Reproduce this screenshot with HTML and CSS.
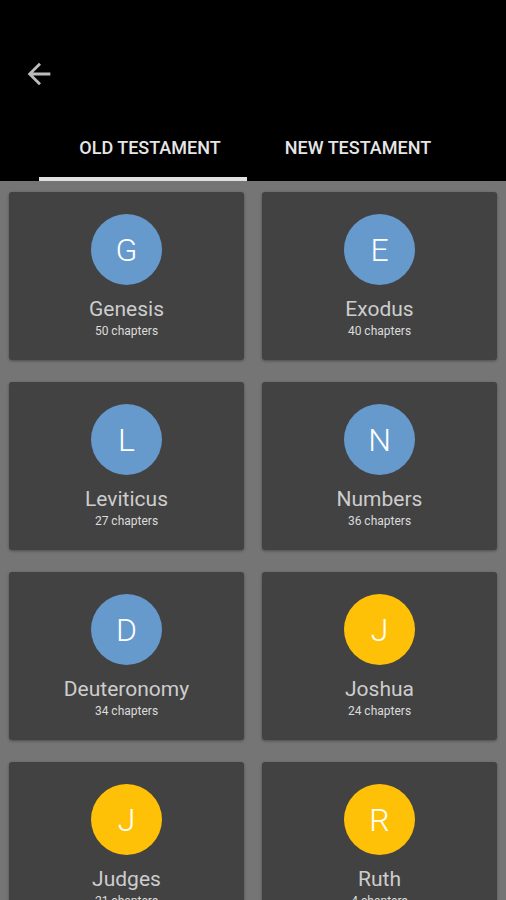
FILE: index.html
```html
<!DOCTYPE html>
<html lang="en">
<head>
  <meta charset="UTF-8">
  <meta name="viewport" content="width=device-width, initial-scale=1.0">
  <title>Books</title>
  <link rel="stylesheet" href="styles.css">
</head>
<body>
  <header class="appbar">
    <div class="statusbar"></div>
    <div class="toolbar">
      <button class="back" aria-label="Back">
        <svg viewBox="0 0 24 24" width="34" height="34">
          <path d="M20 11H7.83l5.59-5.59L12 4l-8 8 8 8 1.41-1.41L7.83 13H20v-2z" fill="#bdbdbd"/>
        </svg>
      </button>
    </div>
    <nav class="tabs">
      <div class="tab active">OLD TESTAMENT</div>
      <div class="tab">NEW TESTAMENT</div>
    </nav>
  </header>

  <main class="grid">
    <div class="card">
      <div class="avatar blue">G</div>
      <div class="name">Genesis</div>
      <div class="chapters">50 chapters</div>
    </div>
    <div class="card">
      <div class="avatar blue">E</div>
      <div class="name">Exodus</div>
      <div class="chapters">40 chapters</div>
    </div>
    <div class="card">
      <div class="avatar blue">L</div>
      <div class="name">Leviticus</div>
      <div class="chapters">27 chapters</div>
    </div>
    <div class="card">
      <div class="avatar blue">N</div>
      <div class="name">Numbers</div>
      <div class="chapters">36 chapters</div>
    </div>
    <div class="card">
      <div class="avatar blue">D</div>
      <div class="name">Deuteronomy</div>
      <div class="chapters">34 chapters</div>
    </div>
    <div class="card">
      <div class="avatar amber">J</div>
      <div class="name">Joshua</div>
      <div class="chapters">24 chapters</div>
    </div>
    <div class="card">
      <div class="avatar amber">J</div>
      <div class="name">Judges</div>
      <div class="chapters">21 chapters</div>
    </div>
    <div class="card">
      <div class="avatar amber">R</div>
      <div class="name">Ruth</div>
      <div class="chapters">4 chapters</div>
    </div>
  </main>
</body>
</html>
```

FILE: styles.css
```css
html, body {
  margin: 0;
  height: 100%;
  overflow: hidden;
}
body {
  font-family: Roboto, 'Noto Sans', sans-serif;
  background-color: #757575;
}
.appbar {
  background: #000;
}
.statusbar {
  height: 34px;
}
.toolbar {
  height: 79px;
  display: flex;
  align-items: center;
  padding-left: 22px;
}
.back {
  background: none;
  border: none;
  padding: 0;
  width: 34px;
  height: 34px;
  cursor: pointer;
}
.back svg {
  display: block;
}
.tabs {
  display: flex;
  height: 68px;
  padding-left: 39px;
}
.tab {
  width: 208px;
  box-sizing: border-box;
  padding: 24px 0 0 14px;
  text-align: center;
  color: #e6e6e6;
  font-size: 18px;
  font-weight: 500;
  line-height: 22px;
  border-bottom: 4px solid transparent;
}
.tab.active {
  border-bottom-color: #e0e0e0;
}
.grid {
  display: grid;
  grid-template-columns: 235px 235px;
  column-gap: 18px;
  row-gap: 22px;
  padding: 11px 9px;
}
.card {
  height: 168px;
  box-sizing: border-box;
  padding-top: 22px;
  background: #424242;
  border-radius: 3px;
  box-shadow: 0 1px 3px rgba(0, 0, 0, 0.35);
  display: flex;
  flex-direction: column;
  align-items: center;
}
.avatar {
  width: 71px;
  height: 71px;
  border-radius: 50%;
  display: flex;
  align-items: center;
  justify-content: center;
  color: #fff;
  font-size: 32px;
  font-weight: 300;
}
.avatar.blue {
  background-color: #6699cc;
}
.avatar.amber {
  background-color: #ffc107;
}
.name {
  margin-top: 12px;
  font-size: 21px;
  line-height: 24px;
  color: #cdcdcd;
}
.chapters {
  margin-top: 2px;
  font-size: 12px;
  line-height: 16px;
  color: #dcdcdc;
}
```
